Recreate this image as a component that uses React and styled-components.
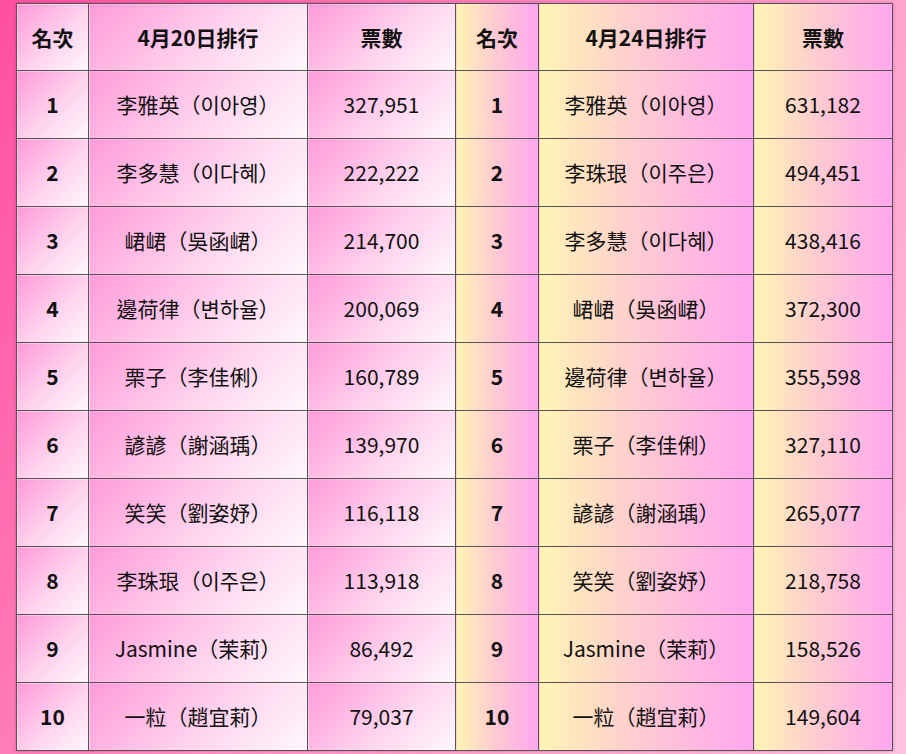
import React from "react";
import styled, { createGlobalStyle } from "styled-components";

const Global = createGlobalStyle`
  html, body { margin: 0; padding: 0; }
  body {
    width: 906px;
    height: 754px;
    overflow: hidden;
    background: linear-gradient(120deg, #ff4f9f 0%, #ff8cc3 45%, #ffc3df 100%);
    font-family: "Noto Sans CJK TC", "Noto Sans", sans-serif;
    color: #111;
  }
`;

const Page = styled.div`
  padding: 3px 14px 3px 16px;
`;

const Table = styled.table`
  border-collapse: collapse;
  table-layout: fixed;
  width: 876px;
  box-shadow: 0 0 3px rgba(80, 0, 40, 0.25);
`;

const Row = styled.tr`
  height: ${(p) => (p.$head ? 67 : 68)}px;
`;

const leftBg = "linear-gradient(135deg, #ff9bd9 0%, #ffd3ee 55%, #fff8fc 100%)";
const rightBg = "linear-gradient(90deg, #fff4b4 0%, #ffc8d4 50%, #ffa6f0 100%)";

const Cell = styled.td`
  border: 1px solid #555;
  padding: 0;
  text-align: center;
  vertical-align: middle;
  font-size: 21px;
  line-height: 1;
  font-weight: ${(p) => (p.$bold ? 700 : 400)};
  background: ${(p) => (p.$side === "right" ? rightBg : leftBg)};
`;

const left = [
  ["李雅英（이아영）", "327,951"],
  ["李多慧（이다혜）", "222,222"],
  ["峮峮（吳函峮）", "214,700"],
  ["邊荷律（변하율）", "200,069"],
  ["栗子（李佳俐）", "160,789"],
  ["諺諺（謝涵瑀）", "139,970"],
  ["笑笑（劉姿妤）", "116,118"],
  ["李珠珢（이주은）", "113,918"],
  ["Jasmine（茉莉）", "86,492"],
  ["一粒（趙宜莉）", "79,037"],
];

const right = [
  ["李雅英（이아영）", "631,182"],
  ["李珠珢（이주은）", "494,451"],
  ["李多慧（이다혜）", "438,416"],
  ["峮峮（吳函峮）", "372,300"],
  ["邊荷律（변하율）", "355,598"],
  ["栗子（李佳俐）", "327,110"],
  ["諺諺（謝涵瑀）", "265,077"],
  ["笑笑（劉姿妤）", "218,758"],
  ["Jasmine（茉莉）", "158,526"],
  ["一粒（趙宜莉）", "149,604"],
];

const widths = [72, 219, 148, 83, 215, 139];

export default function App() {
  return (
    <>
      <Global />
      <Page>
        <Table>
          <colgroup>
            {widths.map((w, i) => (
              <col key={i} style={{ width: w }} />
            ))}
          </colgroup>
          <thead>
            <Row $head>
              <Cell as="th" $bold>名次</Cell>
              <Cell as="th" $bold>4月20日排行</Cell>
              <Cell as="th" $bold>票數</Cell>
              <Cell as="th" $bold $side="right">名次</Cell>
              <Cell as="th" $bold $side="right">4月24日排行</Cell>
              <Cell as="th" $bold $side="right">票數</Cell>
            </Row>
          </thead>
          <tbody>
            {left.map((l, i) => (
              <Row key={i}>
                <Cell $bold>{i + 1}</Cell>
                <Cell>{l[0]}</Cell>
                <Cell>{l[1]}</Cell>
                <Cell $bold $side="right">{i + 1}</Cell>
                <Cell $side="right">{right[i][0]}</Cell>
                <Cell $side="right">{right[i][1]}</Cell>
              </Row>
            ))}
          </tbody>
        </Table>
      </Page>
    </>
  );
}
